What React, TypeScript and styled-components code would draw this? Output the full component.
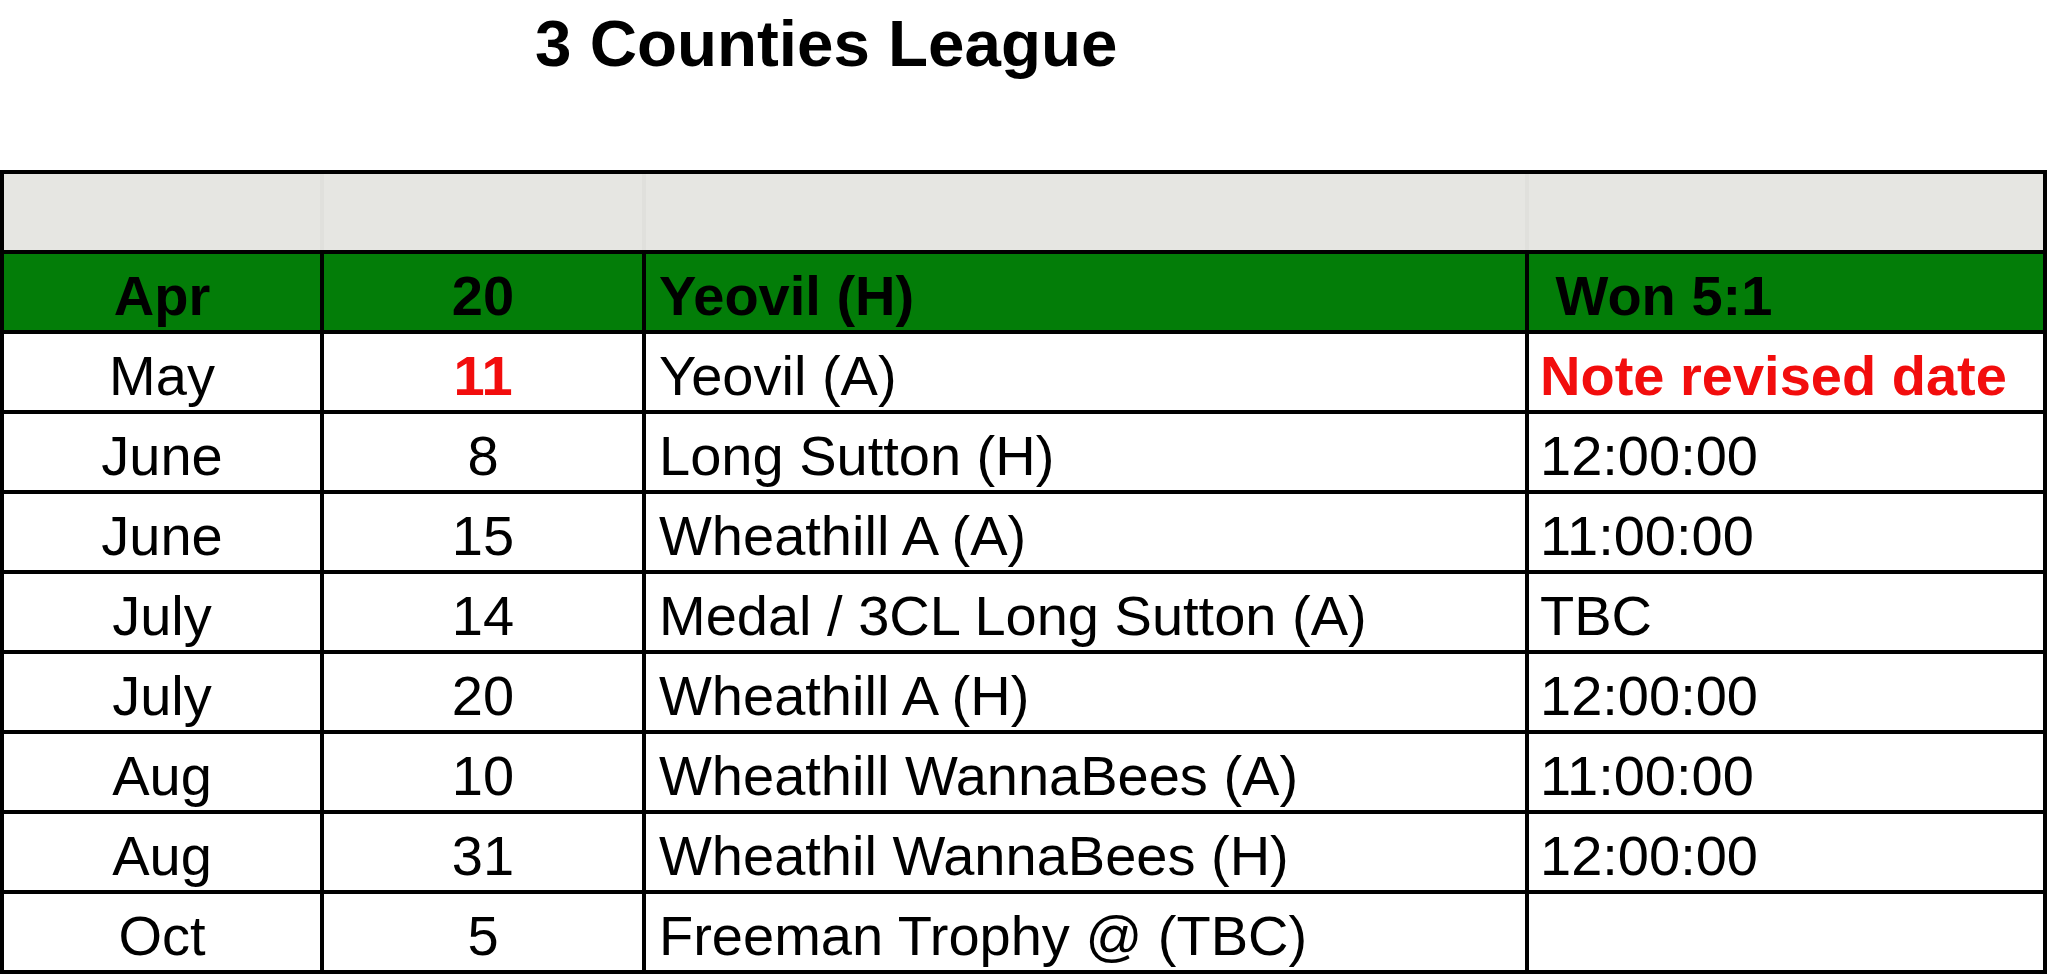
import styled, { createGlobalStyle } from "styled-components";

interface IFixture {
  month: string;
  day: string;
  match: string;
  note: string;
  dayAlert?: boolean;
  noteAlert?: boolean;
}

const fixtures: IFixture[] = [
  { month: "May", day: "11", match: "Yeovil (A)", note: "Note revised date", dayAlert: true, noteAlert: true },
  { month: "June", day: "8", match: "Long Sutton (H)", note: "12:00:00" },
  { month: "June", day: "15", match: "Wheathill A (A)", note: "11:00:00" },
  { month: "July", day: "14", match: "Medal / 3CL Long Sutton (A)", note: "TBC" },
  { month: "July", day: "20", match: "Wheathill A (H)", note: "12:00:00" },
  { month: "Aug", day: "10", match: "Wheathill WannaBees (A)", note: "11:00:00" },
  { month: "Aug", day: "31", match: "Wheathil WannaBees (H)", note: "12:00:00" },
  { month: "Oct", day: "5", match: "Freeman Trophy @ (TBC)", note: "" },
];

const App = () => {
  return (
    <>
      <GlobalStyle />
      <Page>
        <Title>3 Counties League</Title>
        <Sheet>
          <Row $band>
            <Cell $fill="#e6e6e2" />
            <Cell $fill="#e6e6e2" />
            <Cell $fill="#e6e6e2" />
            <Cell $fill="#e6e6e2" />
          </Row>
          <Row>
            <Cell $fill="#037d08" $align="center" $bold>
              Apr
            </Cell>
            <Cell $fill="#037d08" $align="center" $bold>
              20
            </Cell>
            <Cell $fill="#037d08" $pad={13} $bold>
              Yeovil (H)
            </Cell>
            <Cell $fill="#037d08" $pad={11} $bold>
              {" Won 5:1"}
            </Cell>
          </Row>
          {fixtures.map((f, i) => (
            <Row key={i}>
              <Cell $align="center">{f.month}</Cell>
              <Cell $align="center" $bold={f.dayAlert} $red={f.dayAlert}>
                {f.day}
              </Cell>
              <Cell $pad={13}>{f.match}</Cell>
              <Cell $pad={11} $bold={f.noteAlert} $red={f.noteAlert}>
                {f.note}
              </Cell>
            </Row>
          ))}
        </Sheet>
      </Page>
    </>
  );
};

export default App;

const GlobalStyle = createGlobalStyle`
  html, body {
    margin: 0;
    padding: 0;
    background: #ffffff;
  }
  body {
    font-family: "Liberation Sans", Arial, sans-serif;
    color: #000;
  }
`;

const Page = styled.div`
  display: flex;
  flex-direction: column;
  padding-top: 6px;
  width: 2048px;
`;

const Title = styled.h1`
  margin: 0 0 89px 0;
  padding-left: 535px;
  font-size: 65.5px;
  line-height: 75px;
  font-weight: bold;
`;

const Sheet = styled.div`
  display: flex;
  flex-direction: column;
  gap: 4px;
  width: 2047px;
  box-sizing: border-box;
  padding: 4px;
  background: #000;
`;

const Row = styled.div<{ $band?: boolean }>`
  display: grid;
  grid-template-columns: 316px 318px 879px 514px;
  gap: 4px;
  height: 76px;
  background: ${(p) => (p.$band ? "#e0e0dc" : "#000")};
`;

const Cell = styled.div<{
  $fill?: string;
  $align?: "center" | "left";
  $pad?: number;
  $bold?: boolean;
  $red?: boolean;
}>`
  display: flex;
  align-items: center;
  justify-content: ${(p) => (p.$align === "center" ? "center" : "flex-start")};
  padding-left: ${(p) => (p.$pad ? `${p.$pad}px` : "0")};
  padding-top: 6px;
  box-sizing: border-box;
  background: ${(p) => p.$fill || "#ffffff"};
  font-size: 56px;
  font-weight: ${(p) => (p.$bold ? "bold" : "normal")};
  color: ${(p) => (p.$red ? "#f20d0d" : "#000")};
  white-space: pre;
  overflow: hidden;
`;
